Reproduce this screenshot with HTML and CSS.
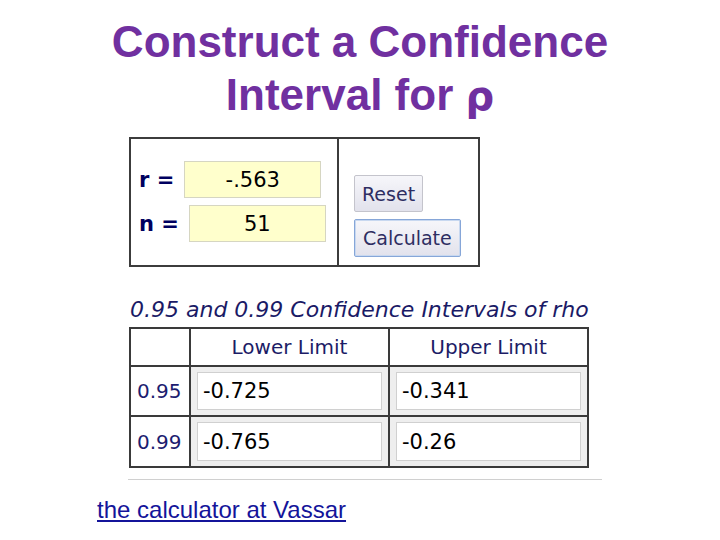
FILE: index.html
```html
<!DOCTYPE html>
<html>
<head>
<meta charset="utf-8">
<link rel="stylesheet" href="styles.css">
</head>
<body>
<h1 class="title">Construct a Confidence<br>Interval for <span class="rho">ρ</span></h1>
<div class="sheet">
  <div class="calc">
    <div class="inputs">
      <div class="field"><span class="label">r =</span><span class="box">-.563</span></div>
      <div class="field"><span class="label">n =</span><span class="box">51</span></div>
    </div>
    <div class="actions">
      <button class="btn">Reset</button>
      <button class="btn btn-focus">Calculate</button>
    </div>
  </div>
  <h2 class="caption">0.95 and 0.99 Confidence Intervals of rho</h2>
  <div class="results">
    <div class="cell head"></div>
    <div class="cell head">Lower Limit</div>
    <div class="cell head">Upper Limit</div>
    <div class="cell level">0.95</div>
    <div class="cell val"><span class="out">-0.725</span></div>
    <div class="cell val"><span class="out">-0.341</span></div>
    <div class="cell level">0.99</div>
    <div class="cell val"><span class="out">-0.765</span></div>
    <div class="cell val"><span class="out">-0.26</span></div>
  </div>
  <div class="rule"></div>
</div>
<p class="source"><a href="#">the calculator at Vassar</a></p>
</body>
</html>
```

FILE: styles.css
```css
html, body {
  margin: 0;
  padding: 0;
  background: #ffffff;
}

body {
  width: 720px;
  height: 540px;
  overflow: hidden;
}

.title {
  margin: 15px 0 0 0;
  text-align: center;
  font-family: "Liberation Sans", Arial, sans-serif;
  font-weight: bold;
  font-size: 44px;
  line-height: 53px;
  color: #7030a0;
}

.rho {
  font-family: "DejaVu Sans", sans-serif;
  font-weight: bold;
  font-size: 40px;
  line-height: 0;
}

.sheet {
  margin: 16px 0 0 129px;
  width: 473px;
  font-family: "DejaVu Sans", Verdana, sans-serif;
}

.calc {
  display: flex;
  width: 347px;
  height: 126px;
  border: 2px solid #3c3c3c;
}

.inputs {
  width: 198px;
  border-right: 2px solid #3c3c3c;
  display: flex;
  flex-direction: column;
  justify-content: center;
  gap: 7px;
  padding: 0 0 1px 8px;
}

.field {
  display: flex;
  align-items: center;
}

.label {
  font-weight: bold;
  font-size: 21px;
  color: #000060;
  margin-right: 10px;
}

.box {
  box-sizing: border-box;
  width: 137px;
  height: 37px;
  background: #ffffcc;
  border: 1px solid #d6d6c2;
  display: flex;
  align-items: center;
  justify-content: center;
  font-size: 21px;
  color: #000000;
}

.actions {
  flex: 1;
  display: flex;
  flex-direction: column;
  align-items: flex-start;
  gap: 7px;
  padding: 36px 0 0 15px;
}

.btn {
  box-sizing: border-box;
  height: 37px;
  padding: 0 7px;
  font-family: "DejaVu Sans", Verdana, sans-serif;
  font-size: 19px;
  color: #2e2e62;
  background: linear-gradient(#f6f6fa, #e2e2ec);
  border: 1px solid #c4c4cc;
  border-radius: 2px;
}

.btn-focus {
  height: 38px;
  padding: 0 8px;
  border: 1px solid #86a6d8;
  box-shadow: inset 0 0 0 1px #c8d8f0;
}

.caption {
  margin: 30px 0 4px 1px;
  font-size: 22px;
  line-height: 26px;
  font-weight: normal;
  font-style: italic;
  color: #1a1a66;
}

.results {
  display: grid;
  grid-template-columns: 58px 197px 197px;
  grid-template-rows: 36px 48px 49px;
  gap: 2px;
  padding: 2px;
  width: 456px;
  background: #3a3a3a;
}

.cell {
  background: #ffffff;
  display: flex;
  align-items: center;
  font-size: 20px;
}

.head {
  justify-content: center;
  color: #1c1c66;
}

.level {
  padding-left: 6px;
  color: #1c1c70;
}

.val {
  background: #eeeeee;
  padding: 5px 6px;
  align-items: stretch;
}

.out {
  flex: 1;
  display: flex;
  align-items: center;
  background: #ffffff;
  border: 1px solid #d0d0d0;
  padding-left: 5px;
  font-size: 21px;
  color: #000000;
}

.rule {
  margin: 11px 0 0 -1px;
  height: 1px;
  background: #d0d0d0;
}

.source {
  margin: 16px 0 0 97px;
  font-family: "Liberation Sans", Arial, sans-serif;
  font-size: 24px;
  line-height: 28px;
}

.source a {
  color: #14149a;
  text-decoration: underline;
}
```
